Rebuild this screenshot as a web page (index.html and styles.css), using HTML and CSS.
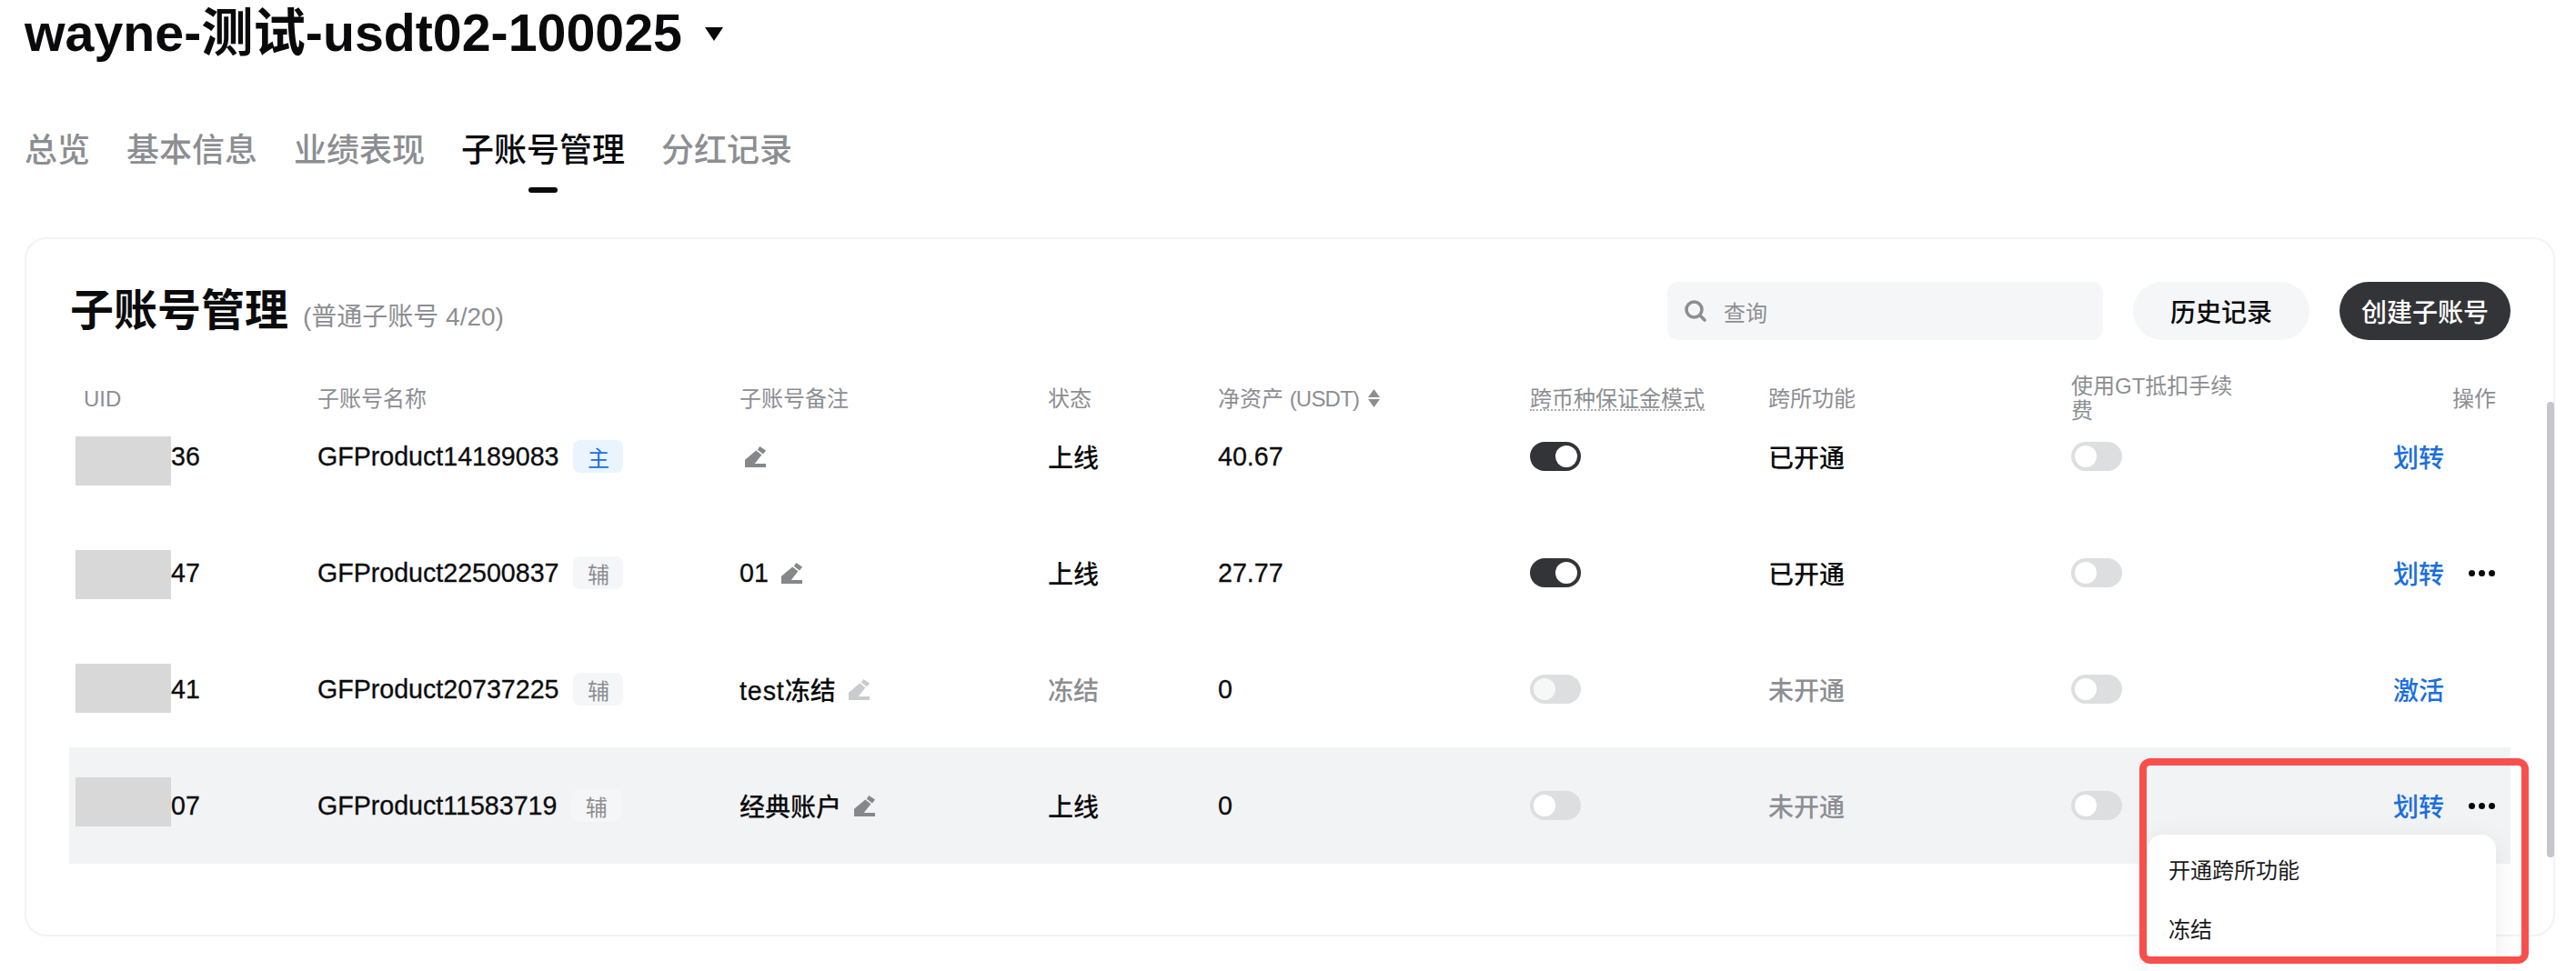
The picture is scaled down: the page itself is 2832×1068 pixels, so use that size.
FILE: index.html
```html
<!DOCTYPE html>
<html lang="zh-CN">
<head>
<meta charset="utf-8">
<title>子账号管理</title>
<link rel="stylesheet" href="styles.css">
</head>
<body>
<svg class="sprite" width="0" height="0" aria-hidden="true">
  <symbol id="pencil" viewBox="0 0 25 25">
    <path d="M17.7 0 25 5 21.7 9.3 15 4Z"/>
    <path d="M13.3 5 20 10 11.7 20.7H25V25H0V16Z"/>
  </symbol>
</svg>
<header class="title-row">
  <h1 class="title">wayne-测试-usdt02-100025</h1>
  <span class="caret"></span>
</header>
<nav class="tabs">
  <a class="tab">总览</a>
  <a class="tab">基本信息</a>
  <a class="tab">业绩表现</a>
  <a class="tab active">子账号管理</a>
  <a class="tab">分红记录</a>
</nav>
<main class="card">
  <div class="toolbar">
    <div class="heading">
      <h2 class="card-title">子账号管理</h2>
      <span class="count">(普通子账号 4/20)</span>
    </div>
    <div class="actions">
      <div class="search">
        <svg class="search-icon" viewBox="0 0 24 24"><circle cx="10.5" cy="10.5" r="8.5" /><path d="M17 17l5 5"/></svg>
        <span>查询</span>
      </div>
      <button class="btn">历史记录</button>
      <button class="btn primary">创建子账号</button>
    </div>
  </div>
  <div class="table">
    <div class="row head">
      <div>UID</div>
      <div>子账号名称</div>
      <div>子账号备注</div>
      <div>状态</div>
      <div class="sortable"><span>净资产 <span class="unit">(USDT)</span></span>
        <svg class="sort" viewBox="0 0 13 20"><path d="M6.5 0l6.5 9H0zM6.5 20L0 11h13z"/></svg>
      </div>
      <div><span class="dotted">跨币种保证金模式</span></div>
      <div>跨所功能</div>
      <div class="wrap">使用GT抵扣手续费</div>
      <div class="op">操作</div>
    </div>

    <div class="row first">
      <div class="uid num"><span class="redact r1"></span>36</div>
      <div class="name"><span class="num">GFProduct14189083</span><span class="badge main">主</span></div>
      <div class="note"><svg class="pen solo"><use href="#pencil"/></svg></div>
      <div>上线</div>
      <div class="num">40.67</div>
      <div><span class="switch on"></span></div>
      <div>已开通</div>
      <div><span class="switch"></span></div>
      <div class="op"><a class="link">划转</a><span class="dots hidden"><i></i><i></i><i></i></span></div>
    </div>

    <div class="row">
      <div class="uid num"><span class="redact r2"></span>47</div>
      <div class="name"><span class="num">GFProduct22500837</span><span class="badge">辅</span></div>
      <div class="note"><span class="num">01</span><svg class="pen"><use href="#pencil"/></svg></div>
      <div>上线</div>
      <div class="num">27.77</div>
      <div><span class="switch on"></span></div>
      <div>已开通</div>
      <div><span class="switch"></span></div>
      <div class="op"><a class="link">划转</a><span class="dots"><i></i><i></i><i></i></span></div>
    </div>

    <div class="row">
      <div class="uid num"><span class="redact r3"></span>41</div>
      <div class="name"><span class="num">GFProduct20737225</span><span class="badge">辅</span></div>
      <div class="note"><span><span class="num wide">test</span>冻结</span><svg class="pen faint"><use href="#pencil"/></svg></div>
      <div class="muted">冻结</div>
      <div class="num">0</div>
      <div><span class="switch off-dim"></span></div>
      <div class="muted">未开通</div>
      <div><span class="switch"></span></div>
      <div class="op"><a class="link">激活</a><span class="dots hidden"><i></i><i></i><i></i></span></div>
    </div>

    <div class="row hover">
      <div class="uid num"><span class="redact r4"></span>07</div>
      <div class="name"><span class="num">GFProduct11583719</span><span class="badge">辅</span></div>
      <div class="note">经典账户<svg class="pen"><use href="#pencil"/></svg></div>
      <div>上线</div>
      <div class="num">0</div>
      <div><span class="switch"></span></div>
      <div class="muted">未开通</div>
      <div><span class="switch"></span></div>
      <div class="op"><a class="link">划转</a><span class="dots"><i></i><i></i><i></i></span></div>
    </div>
  </div>
  <div class="scrollbar"></div>
</main>
<div class="menu">
  <div class="menu-item">开通跨所功能</div>
  <div class="menu-item">冻结</div>
</div>
<div class="annotation"></div>
</body>
</html>
```

FILE: styles.css
```css
* { box-sizing: border-box; }
html, body { margin: 0; height: 100%; }
body {
  position: relative;
  width: 2832px;
  height: 1068px;
  overflow: hidden;
  background: #fff;
  color: #0b0b0d;
  font-family: "Liberation Sans", "Noto Sans CJK SC", sans-serif;
}
.sprite { position: absolute; }

.title-row { display: flex; align-items: flex-start; height: 76px; padding-left: 27px; gap: 25px; }
.title { margin: 0; font-size: 57.3px; line-height: 73px; font-weight: 600; color: #0a0a0c; }
.caret {
  width: 0; height: 0;
  margin-top: 30px;
  border-left: 10px solid transparent;
  border-right: 10px solid transparent;
  border-top: 15px solid #0a0a0c;
}

.tabs { display: flex; gap: 40px; height: 185px; padding: 64px 0 0 27px; }
.tab { position: relative; height: 52px; font-size: 36px; line-height: 52px; font-weight: 500; color: #8c8e92; }
.tab.active { color: #0a0a0c; }
.tab.active::after {
  content: ""; position: absolute; left: 50%; bottom: -20px;
  width: 32px; height: 6px; margin-left: -16px; border-radius: 3px; background: #0a0a0c;
}

.card {
  position: relative;
  width: 2782px;
  height: 769px;
  margin-left: 27px;
  padding: 47px 47px 0;
  border: 2px solid #f2f3f5;
  border-radius: 24px;
  background: #fff;
}

.toolbar { display: flex; justify-content: space-between; align-items: center; height: 64px; }
.heading { display: flex; align-items: baseline; gap: 16px; padding-left: 1px; }
.card-title { margin: 0; font-size: 48px; line-height: 64px; font-weight: 600; }
.count { font-size: 28px; color: #8c8e92; }
.actions { display: flex; gap: 33px; }
.search {
  display: flex; align-items: center; gap: 19px;
  width: 479px; height: 64px; padding-left: 19px;
  border-radius: 12px; background: #f5f6f7;
  font-size: 24px; color: #8c8e92;
}
.search-icon { width: 24px; height: 24px; fill: none; stroke: #8c8e92; stroke-width: 3.6; stroke-linecap: round; }
.btn {
  width: 194px; height: 64px; padding: 0; border: 0; border-radius: 32px;
  background: #f5f6f7; color: #0a0a0c;
  font: 500 28px "Liberation Sans", "Noto Sans CJK SC", sans-serif;
}
.btn.primary { width: 188px; background: #333437; color: #fff; }

.table { margin-top: 30px; }
.row {
  display: grid;
  grid-template-columns: 273px 464px 339px 187px 343px 262px 333px 283px 200px;
  align-items: center;
  height: 128px;
  font-size: 28px;
  font-weight: 500;
}
.num { font-size: 28.6px; -webkit-text-stroke: .3px currentColor; }
.wide { letter-spacing: .9px; }
.head { height: 66px; padding-top: 2px; font-size: 24px; font-weight: 400; color: #8c8e92; line-height: 27px; }
.head > div:first-child { padding-left: 16px; }
.first { height: 96px; padding-bottom: 32px; }
.hover { background: #f2f3f5; }
.muted { color: #8c8e92; }
.dotted { display: inline-block; line-height: 23px; border-bottom: 2px dotted #a8aaad; }
.wrap { width: 190px; }
.sortable { display: flex; align-items: center; gap: 10px; white-space: nowrap; }
.unit { letter-spacing: -.8px; }
.sort { width: 13px; height: 20px; fill: #8c8e92; }

.uid { align-self: stretch; display: flex; align-items: center; position: relative; padding-left: 112px; }
.redact { position: absolute; left: 7px; width: 105px; height: 54px; background: #d8d8d8; }
.r1 { top: 10px; }
.r2 { top: 39px; }
.r3 { top: 36px; }
.r4 { top: 33px; }

.name { display: flex; align-items: center; }
.badge {
  display: flex; align-items: center; justify-content: center;
  width: 55px; height: 36px; margin-left: 16px;
  border-radius: 8px; background: #f5f6f7; color: #8c8e92;
  font-size: 24px; font-weight: 400;
}
.badge.main { background: #e9f4ff; color: #1a6fe0; }
.note { display: flex; align-items: center; gap: 13px; }
.pen { width: 25px; height: 23px; fill: #85878b; }
.pen.solo { margin-left: 5px; }
.pen.faint { fill: #c9cbce; }

.switch {
  display: block; position: relative;
  width: 56px; height: 32px; border-radius: 16px; background: #dcdee0;
}
.switch::after {
  content: ""; position: absolute; top: 4px; left: 4px;
  width: 24px; height: 24px; border-radius: 50%; background: #fff;
}
.switch.on { background: #333437; }
.switch.on::after { left: 28px; }
.switch.off-dim::after { background: #f7f7f8; }

.op { display: flex; justify-content: flex-end; align-items: center; gap: 27px; padding-right: 17px; }
.head .op { padding-right: 16px; }
.link { color: #1a6fe0; }
.dots { display: flex; gap: 4px; }
.dots i { width: 7px; height: 7px; border-radius: 50%; background: #0a0a0c; }
.dots.hidden { visibility: hidden; }

.scrollbar {
  position: absolute; top: 179px; right: -1px;
  width: 8px; height: 501px; border-radius: 4px; background: #c4c6c9;
}

.menu {
  position: absolute; left: 2361px; top: 918px;
  width: 383px; height: 150px; padding-top: 8px;
  border-radius: 16px 16px 0 0; background: #fff;
  box-shadow: 0 6px 30px rgba(0, 0, 0, .08);
}
.menu-item { height: 65px; padding-left: 23px; font-size: 24px; line-height: 64px; color: #1a1a1c; }
.annotation {
  position: absolute; left: 2352px; top: 834px;
  width: 428px; height: 226px;
  border: 8px solid #f74f4c; border-radius: 12px;
}
```
